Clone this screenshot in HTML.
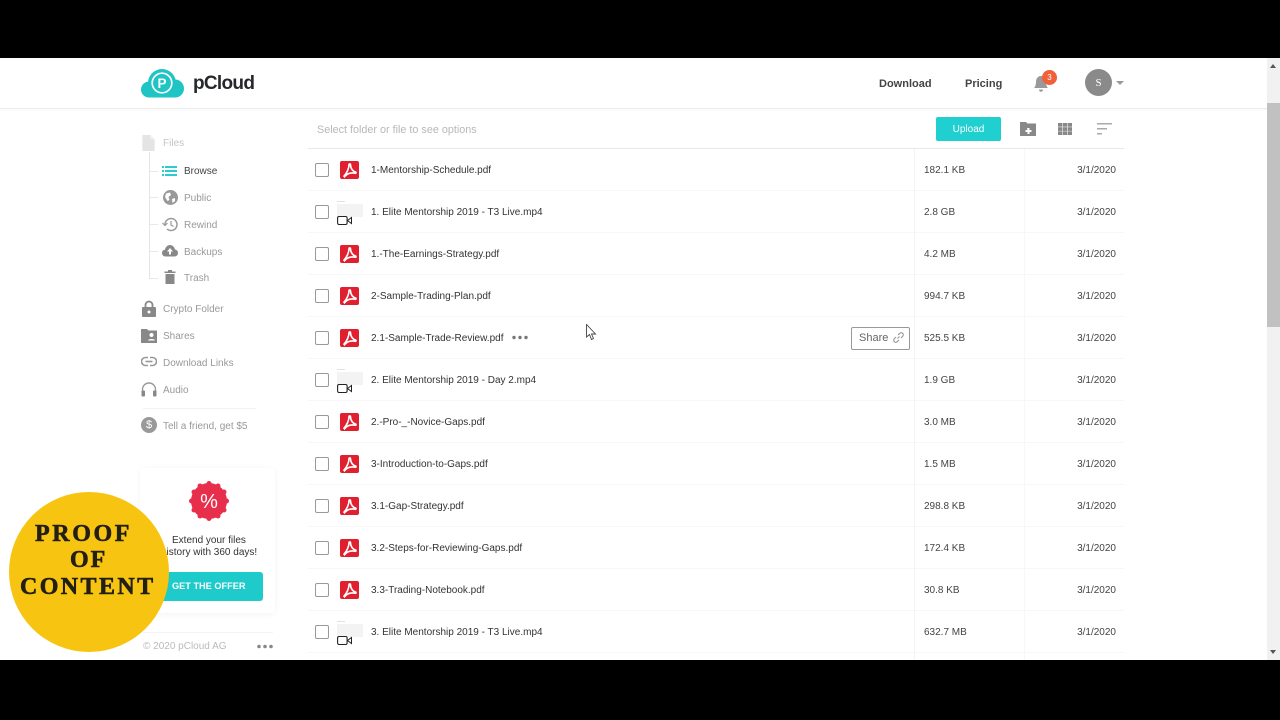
<!DOCTYPE html>
<html><head><meta charset="utf-8">
<style>
*{box-sizing:border-box}
html,body{margin:0;padding:0;width:1280px;height:720px;overflow:hidden;background:#000;font-family:"Liberation Sans",sans-serif}
#page{position:absolute;left:0;top:58px;width:1280px;height:602px;background:#fff;overflow:hidden;filter:blur(.3px)}
.t{position:absolute;white-space:nowrap;line-height:14px}
.a{position:absolute}
.nav{font-size:10px;color:#999}
.row{position:absolute;left:308px;width:816px;height:42px;border-bottom:1px solid #f7f7f7}
.cb{position:absolute;left:7px;top:14px;width:14px;height:14px;border:1px solid #999;border-radius:2px;background:#fff}
.nm{position:absolute;left:63px;top:15px;font-size:10px;color:#333;line-height:14px;white-space:nowrap}
.sz{position:absolute;left:616px;top:15px;font-size:10px;color:#444;line-height:14px}
.dt{position:absolute;right:8px;top:15px;font-size:10px;color:#444;line-height:14px}
.pdf{position:absolute;left:32px;top:12px;width:19px;height:18px;background:#e0202f;border-radius:2px}
.vid{position:absolute;left:29px;top:3px;width:26px;height:32px}
</style></head><body>
<svg width="0" height="0" style="position:absolute"><defs>
<g id="p"><path d="M4 15.200 C7 12 9 7 9 3.800 C9 2.600 10.500 2.600 10.500 3.800 C10.500 7.500 13 10.500 15.500 11 C16.500 11.200 16 12.500 15 12.200 C11 11.500 7 12.500 4.500 15.800Z" fill="none" stroke="#fff" stroke-width="1.600"/></g>
<g id="v"><rect x="0" y="7" width="8" height="1" fill="#e2e2e2"/><rect x="0" y="10" width="26" height="13" fill="#f3f3f3"/><rect x="0.600" y="22.500" width="9.500" height="8" rx="1.500" fill="#fff" stroke="#222" stroke-width="1.100"/><path d="M10.500 26.500 L14.500 23.500 V29.500Z" fill="#fff" stroke="#222" stroke-width="1"/></g>
</defs></svg>
<div id="page">
<!-- header -->
<div class="a" style="left:0;top:50px;width:1267px;height:1px;background:#ececec"></div>
<div class="a" style="left:0;top:51px;width:1267px;height:2px;background:#fbfbfb"></div>
<svg class="a" style="left:141px;top:11px" width="43" height="29" viewBox="0 0 43 29"><g fill="#1fc4c4"><circle cx="8" cy="20.500" r="8"/><circle cx="21" cy="14" r="14"/><circle cx="34" cy="19.500" r="9"/><rect x="8" y="18" width="26" height="10.500"/></g><circle cx="21" cy="14" r="9.800" fill="none" stroke="#fff" stroke-width="1.700"/><text x="21" y="18.800" font-size="13.500" font-weight="bold" fill="#fff" text-anchor="middle" font-family="Liberation Sans">P</text></svg>
<div class="t" style="left:193px;top:15px;font-size:19px;line-height:22px;font-weight:bold;color:#26282b;letter-spacing:-.7px">pCloud</div>
<div class="t" style="left:879px;top:19px;font-size:11px;font-weight:bold;color:#444">Download</div>
<div class="t" style="left:965px;top:19px;font-size:11px;font-weight:bold;color:#444">Pricing</div>
<svg class="a" style="left:1033px;top:17px" width="16" height="18" viewBox="0 0 16 18"><path d="M8 1 C4.500 1 3 4 3 7 C3 10 2 12 1 13 L15 13 C14 12 13 10 13 7 C13 4 11.500 1 8 1Z M6 14.500 L10 14.500 C10 16 9 16.800 8 16.800 C7 16.800 6 16 6 14.500Z" fill="#999"/></svg>
<div class="a" style="left:1042px;top:12px;width:15px;height:15px;border-radius:50%;background:#f0603a;color:#fff;font-size:8px;line-height:15px;text-align:center">3</div>
<div class="a" style="left:1085px;top:11px;width:27px;height:27px;border-radius:50%;background:#8a8a8a;color:#fff;font-size:11px;line-height:28px;text-align:center;font-family:'Liberation Serif',serif">S</div>
<div class="a" style="left:1116px;top:23px;border-left:4px solid transparent;border-right:4px solid transparent;border-top:4px solid #999"></div>

<!-- sidebar -->
<svg class="a" style="left:142px;top:77px" width="13" height="16" viewBox="0 0 13 17"><path d="M0 0H8.500L13 4.500V17H0Z" fill="#e4e4e4"/><path d="M8.500 0V4.500H13" fill="#f2f2f2"/></svg>
<div class="t nav" style="left:163px;top:79px;color:#c4c4c4">Files</div>
<div class="a" style="left:149px;top:94px;width:1px;height:127px;background:#e4e4e4"></div>
<div class="a" style="left:150px;top:113px;width:8px;height:1px;background:#e8e8e8"></div>
<div class="a" style="left:150px;top:139px;width:8px;height:1px;background:#e8e8e8"></div>
<div class="a" style="left:150px;top:166px;width:8px;height:1px;background:#e8e8e8"></div>
<div class="a" style="left:150px;top:193px;width:8px;height:1px;background:#e8e8e8"></div>
<div class="a" style="left:150px;top:220px;width:8px;height:1px;background:#e8e8e8"></div>
<svg class="a" style="left:162px;top:107px" width="15" height="12" viewBox="0 0 15 12" fill="#2ccccc"><rect x="0" y="1" width="2" height="2"/><rect x="3" y="1" width="12" height="2"/><rect x="0" y="5" width="2" height="2"/><rect x="3" y="5" width="12" height="2"/><rect x="0" y="9" width="2" height="2"/><rect x="3" y="9" width="12" height="2"/></svg>
<div class="t nav" style="left:184px;top:107px;color:#444">Browse</div>
<svg class="a" style="left:163px;top:132px" width="15" height="15" viewBox="0 0 15 15"><circle cx="7.500" cy="7.500" r="7.500" fill="#999"/><path d="M3 3.500 L7 2.500 L8 5 L5.500 7 L6.500 10 L4.500 11 L2 7Z M9 9 L12 8 L12 11 L9.500 13Z" fill="#fff"/></svg>
<div class="t nav" style="left:184px;top:134px">Public</div>
<svg class="a" style="left:162px;top:159px" width="16" height="15" viewBox="0 0 16 15" fill="none" stroke="#999" stroke-width="1.500"><path d="M3 7.500 A6 6 0 1 1 5 12"/><path d="M0.500 6 L3 8.500 L5.500 6" stroke-width="1.200"/><path d="M9 4 V8 L11.500 9.500" stroke-width="1.200"/></svg>
<div class="t nav" style="left:184px;top:161px">Rewind</div>
<svg class="a" style="left:162px;top:186px" width="16" height="13" viewBox="0 0 16 13"><path d="M3.500 12.500 C1.500 12.500 0 11 0 9 C0 7 1.500 5.800 3 5.800 C3.500 3 5.500 1 8 1 C10.500 1 12.500 3 13 5.500 C14.800 5.800 16 7.200 16 9 C16 11 14.500 12.500 12.500 12.500Z" fill="#888"/><path d="M8 4 L11 7.500 H9 V10.500 H7 V7.500 H5Z" fill="#fff"/></svg>
<div class="t nav" style="left:184px;top:188px">Backups</div>
<svg class="a" style="left:164px;top:212px" width="12" height="14" viewBox="0 0 12 14" fill="#888"><rect x="0.500" y="1.500" width="11" height="1.500"/><rect x="4" y="0" width="4" height="1.500"/><path d="M1.500 4H10.500V14H1.500Z"/></svg>
<div class="t nav" style="left:184px;top:214px">Trash</div>

<svg class="a" style="left:142px;top:242px" width="14" height="17" viewBox="0 0 14 17"><path d="M3.500 8 V5 A3.500 3.500 0 0 1 10.500 5 V8" fill="none" stroke="#888" stroke-width="1.800"/><rect x="0" y="7" width="14" height="10" rx="1" fill="#888"/><circle cx="7" cy="12" r="1.500" fill="#fff"/></svg>
<div class="t nav" style="left:163px;top:245px">Crypto Folder</div>
<svg class="a" style="left:141px;top:271px" width="16" height="14" viewBox="0 0 16 14"><path d="M0 0H6L7.500 1.500H16V14H0Z" fill="#888"/><circle cx="10.500" cy="6" r="2" fill="#fff"/><path d="M7 11.500 C7 9.500 14 9.500 14 11.500Z" fill="#fff"/></svg>
<div class="t nav" style="left:163px;top:272px">Shares</div>
<svg class="a" style="left:141px;top:298px" width="16" height="11" viewBox="0 0 16 11" fill="none" stroke="#999" stroke-width="1.600"><path d="M7 1.500H4.500A3.800 3.800 0 0 0 4.500 9.500H7"/><path d="M9 1.500H11.500A3.800 3.800 0 0 1 11.500 9.500H9"/><path d="M4.500 5.500H11.500"/></svg>
<div class="t nav" style="left:163px;top:299px">Download Links</div>
<svg class="a" style="left:141px;top:324px" width="16" height="15" viewBox="0 0 16 15"><path d="M1.500 11 V7.500 A6.500 6.500 0 0 1 14.500 7.500 V11" fill="none" stroke="#999" stroke-width="1.400"/><rect x="0.500" y="8.500" width="3.500" height="6" rx="1" fill="#888"/><rect x="12" y="8.500" width="3.500" height="6" rx="1" fill="#888"/></svg>
<div class="t nav" style="left:163px;top:326px">Audio</div>
<div class="a" style="left:143px;top:350px;width:113px;height:1px;background:#f2f2f2"></div>
<div class="a" style="left:141px;top:359px;width:16px;height:16px;border-radius:50%;background:#999;color:#fff;font-size:11px;line-height:16px;text-align:center">$</div>
<div class="t nav" style="left:163px;top:362px">Tell a friend, get $5</div>

<!-- promo -->
<div class="a" style="left:140px;top:410px;width:135px;height:145px;background:#fff;box-shadow:0 1px 7px rgba(0,0,0,.05);border-radius:3px"></div>
<svg class="a" style="left:189px;top:423px" width="40" height="40" viewBox="0 0 40 40"><circle cx="20" cy="20" r="18" fill="#e72e4a"/><g fill="#e72e4a"><circle cx="20" cy="2.500" r="2.500"/><circle cx="29" cy="5" r="2.500"/><circle cx="35" cy="11" r="2.500"/><circle cx="37.500" cy="20" r="2.500"/><circle cx="35" cy="29" r="2.500"/><circle cx="29" cy="35" r="2.500"/><circle cx="20" cy="37.500" r="2.500"/><circle cx="11" cy="35" r="2.500"/><circle cx="5" cy="29" r="2.500"/><circle cx="2.500" cy="20" r="2.500"/><circle cx="5" cy="11" r="2.500"/><circle cx="11" cy="5" r="2.500"/></g><text x="20" y="27" font-size="20" fill="#fff" text-anchor="middle" font-family="Liberation Sans">%</text></svg>
<div class="t" style="left:172px;top:476px;font-size:10px;color:#333">Extend your files</div>
<div class="t" style="left:161px;top:488px;font-size:10px;color:#333">history with 360 days!</div>
<div class="a" style="left:154px;top:514px;width:109px;height:29px;background:#1fcaca;border-radius:3px"></div>
<div class="t" style="left:172px;top:521px;font-size:9.200px;font-weight:bold;color:#fff">GET THE OFFER</div>
<div class="a" style="left:143px;top:574px;width:130px;height:1px;background:#f4f4f4"></div>
<div class="t" style="left:143px;top:582px;font-size:10px;color:#bbb">© 2020 pCloud AG</div>
<svg class="a" style="left:257px;top:586px" width="16" height="5" fill="#888"><circle cx="2" cy="2.500" r="1.800"/><circle cx="8" cy="2.500" r="1.800"/><circle cx="14" cy="2.500" r="1.800"/></svg>

<!-- yellow badge -->
<div class="a" style="left:9px;top:434px;width:160px;height:160px;border-radius:50%;background:#f7c511"></div>
<div class="t" style="left:35px;top:463px;font-family:'Liberation Serif',serif;font-weight:bold;font-size:24px;line-height:26px;letter-spacing:2.600px;color:#231f14;-webkit-text-stroke:.6px #231f14">PROOF</div>
<div class="t" style="left:70px;top:489px;font-family:'Liberation Serif',serif;font-weight:bold;font-size:24px;line-height:26px;letter-spacing:2px;color:#231f14;-webkit-text-stroke:.6px #231f14">OF</div>
<div class="t" style="left:20px;top:516px;font-family:'Liberation Serif',serif;font-weight:bold;font-size:24px;line-height:26px;letter-spacing:2.400px;color:#231f14;-webkit-text-stroke:.6px #231f14">CONTENT</div>

<!-- toolbar -->
<div class="t" style="left:317px;top:65px;font-size:10.800px;color:#b8b8b8">Select folder or file to see options</div>
<div class="a" style="left:936px;top:59px;width:65px;height:24px;background:#20cfcf;border-radius:2px;color:#fff;font-size:10px;line-height:26px;text-align:center">Upload</div>
<svg class="a" style="left:1020px;top:64px" width="16" height="14" viewBox="0 0 16 14"><path d="M0 0H6L7.500 1.500H16V14H0Z" fill="#888"/><path d="M7 6H9.500V8H11.500V10H9.500V12H7.500V10H5.500V8H7.500Z" fill="#fff"/></svg>
<svg class="a" style="left:1058px;top:65px" width="14" height="12" fill="#888"><rect width="4.300" height="3.700"/><rect x="4.850" width="4.300" height="3.700"/><rect x="9.700" width="4.300" height="3.700"/><rect y="4.200" width="4.300" height="3.700"/><rect x="4.850" y="4.200" width="4.300" height="3.700"/><rect x="9.700" y="4.200" width="4.300" height="3.700"/><rect y="8.300" width="4.300" height="3.700"/><rect x="4.850" y="8.300" width="4.300" height="3.700"/><rect x="9.700" y="8.300" width="4.300" height="3.700"/></svg>
<svg class="a" style="left:1097px;top:65px" width="15" height="12" fill="#aaa"><rect width="15" height="1.500"/><rect y="5" width="10" height="1.500"/><rect y="10" width="5" height="1.500"/></svg>
<div class="a" style="left:308px;top:90px;width:816px;height:1px;background:#e8e8e8"></div>

<!-- column lines -->
<div class="a" style="left:914px;top:91px;width:1px;height:511px;background:#f4f4f4"></div>
<div class="a" style="left:1024px;top:91px;width:1px;height:511px;background:#f7f7f7"></div>

<!-- rows -->
<div class="row" style="top:91px"><span class="cb"></span><svg class="pdf" viewBox="0 0 19 18"><use href="#p"/></svg><span class="nm">1-Mentorship-Schedule.pdf</span><span class="sz">182.1 KB</span><span class="dt">3/1/2020</span></div>
<div class="row" style="top:133px"><span class="cb"></span><svg class="vid" viewBox="0 0 26 32"><use href="#v"/></svg><span class="nm">1. Elite Mentorship 2019 - T3 Live.mp4</span><span class="sz">2.8 GB</span><span class="dt">3/1/2020</span></div>
<div class="row" style="top:175px"><span class="cb"></span><svg class="pdf" viewBox="0 0 19 18"><use href="#p"/></svg><span class="nm">1.-The-Earnings-Strategy.pdf</span><span class="sz">4.2 MB</span><span class="dt">3/1/2020</span></div>
<div class="row" style="top:217px"><span class="cb"></span><svg class="pdf" viewBox="0 0 19 18"><use href="#p"/></svg><span class="nm">2-Sample-Trading-Plan.pdf</span><span class="sz">994.7 KB</span><span class="dt">3/1/2020</span></div>
<div class="row" style="top:259px"><span class="cb"></span><svg class="pdf" viewBox="0 0 19 18"><use href="#p"/></svg><span class="nm">2.1-Sample-Trade-Review.pdf</span><span class="sz">525.5 KB</span><span class="dt">3/1/2020</span></div>
<div class="row" style="top:301px"><span class="cb"></span><svg class="vid" viewBox="0 0 26 32"><use href="#v"/></svg><span class="nm">2. Elite Mentorship 2019 - Day 2.mp4</span><span class="sz">1.9 GB</span><span class="dt">3/1/2020</span></div>
<div class="row" style="top:343px"><span class="cb"></span><svg class="pdf" viewBox="0 0 19 18"><use href="#p"/></svg><span class="nm">2.-Pro-_-Novice-Gaps.pdf</span><span class="sz">3.0 MB</span><span class="dt">3/1/2020</span></div>
<div class="row" style="top:385px"><span class="cb"></span><svg class="pdf" viewBox="0 0 19 18"><use href="#p"/></svg><span class="nm">3-Introduction-to-Gaps.pdf</span><span class="sz">1.5 MB</span><span class="dt">3/1/2020</span></div>
<div class="row" style="top:427px"><span class="cb"></span><svg class="pdf" viewBox="0 0 19 18"><use href="#p"/></svg><span class="nm">3.1-Gap-Strategy.pdf</span><span class="sz">298.8 KB</span><span class="dt">3/1/2020</span></div>
<div class="row" style="top:469px"><span class="cb"></span><svg class="pdf" viewBox="0 0 19 18"><use href="#p"/></svg><span class="nm">3.2-Steps-for-Reviewing-Gaps.pdf</span><span class="sz">172.4 KB</span><span class="dt">3/1/2020</span></div>
<div class="row" style="top:511px"><span class="cb"></span><svg class="pdf" viewBox="0 0 19 18"><use href="#p"/></svg><span class="nm">3.3-Trading-Notebook.pdf</span><span class="sz">30.8 KB</span><span class="dt">3/1/2020</span></div>
<div class="row" style="top:553px"><span class="cb"></span><svg class="vid" viewBox="0 0 26 32"><use href="#v"/></svg><span class="nm">3. Elite Mentorship 2019 - T3 Live.mp4</span><span class="sz">632.7 MB</span><span class="dt">3/1/2020</span></div>

<!-- hover row extras -->
<svg class="a" style="left:512px;top:277px" width="16" height="5" fill="#777"><circle cx="2" cy="2.500" r="1.700"/><circle cx="8" cy="2.500" r="1.700"/><circle cx="14" cy="2.500" r="1.700"/></svg>
<div class="a" style="left:851px;top:269px;width:59px;height:23px;border:1px solid #999;border-radius:2px;background:#fff"></div>
<div class="t" style="left:859px;top:273px;font-size:11px;color:#666">Share</div>
<svg class="a" style="left:893px;top:274px" width="11" height="11" viewBox="0 0 11 11" fill="none" stroke="#999" stroke-width="1.100"><path d="M4.500 6.500 L6.500 4.500"/><path d="M5 3 L6.800 1.300 A2 2 0 0 1 9.700 4.200 L8 6"/><path d="M6 8 L4.200 9.700 A2 2 0 0 1 1.300 6.800 L3 5"/></svg>
<svg class="a" style="left:586px;top:266px" width="11" height="17" viewBox="0 0 11 17"><path d="M0.500 0.500 V13 L3.500 10.500 L5.500 15.500 L7.500 14.500 L5.500 10 H9.500Z" fill="#fff" stroke="#444" stroke-width="0.900"/></svg>

<!-- scrollbar -->
<div class="a" style="left:1267px;top:0;width:13px;height:602px;background:#f1f1f1"></div>
<div class="a" style="left:1267px;top:45px;width:13px;height:224px;background:#c1c1c1"></div>
<div class="a" style="left:1270px;top:6px;border-left:3.500px solid transparent;border-right:3.500px solid transparent;border-bottom:4px solid #555"></div>
<div class="a" style="left:1270px;top:592px;border-left:3.500px solid transparent;border-right:3.500px solid transparent;border-top:4px solid #555"></div>
</div>
</body></html>
